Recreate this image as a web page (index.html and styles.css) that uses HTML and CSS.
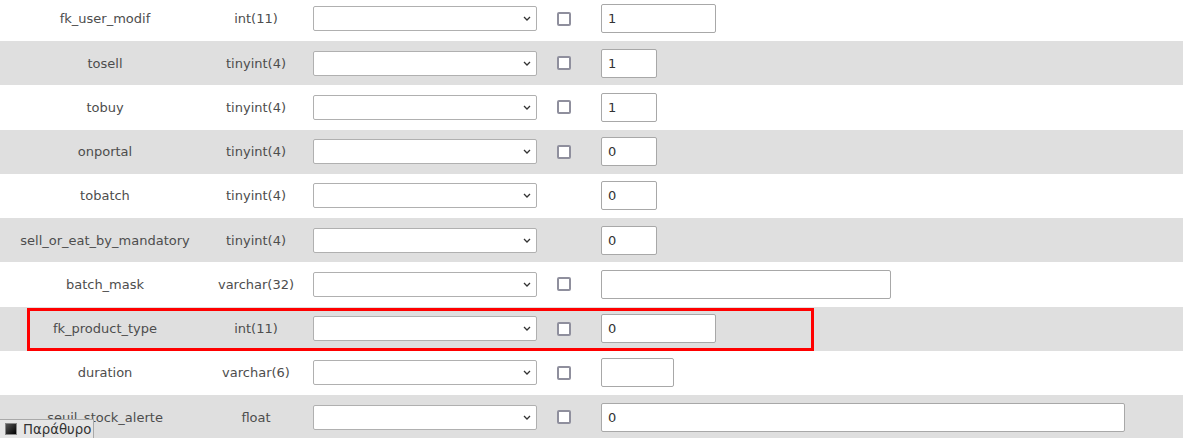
FILE: index.html
```html
<!DOCTYPE html>
<html lang="en">
<head>
  <meta charset="UTF-8">
  <title>Fields</title>
  <link rel="stylesheet" href="styles.css">
</head>
<body>

  <div class="fields">
    <!-- fk_user_modif -->
    <div class="row">
      <div class="name">fk_user_modif</div>
      <div class="type">int(11)</div>
      <div class="sel"><select><option></option></select></div>
      <div class="chk"><input type="checkbox"></div>
      <div class="val"><input type="text" class="w115" value="1"></div>
    </div>
    <div class="row alt">
      <div class="name">tosell</div>
      <div class="type">tinyint(4)</div>
      <div class="sel"><select><option></option></select></div>
      <div class="chk"><input type="checkbox"></div>
      <div class="val"><input type="text" class="w56" value="1"></div>
    </div>
    <div class="row">
      <div class="name">tobuy</div>
      <div class="type">tinyint(4)</div>
      <div class="sel"><select><option></option></select></div>
      <div class="chk"><input type="checkbox"></div>
      <div class="val"><input type="text" class="w56" value="1"></div>
    </div>
    <div class="row alt">
      <div class="name">onportal</div>
      <div class="type">tinyint(4)</div>
      <div class="sel"><select><option></option></select></div>
      <div class="chk"><input type="checkbox"></div>
      <div class="val"><input type="text" class="w56" value="0"></div>
    </div>
    <div class="row">
      <div class="name">tobatch</div>
      <div class="type">tinyint(4)</div>
      <div class="sel"><select><option></option></select></div>
      <div class="chk"></div>
      <div class="val"><input type="text" class="w56" value="0"></div>
    </div>
    <div class="row alt">
      <div class="name">sell_or_eat_by_mandatory</div>
      <div class="type">tinyint(4)</div>
      <div class="sel"><select><option></option></select></div>
      <div class="chk"></div>
      <div class="val"><input type="text" class="w56" value="0"></div>
    </div>
    <div class="row">
      <div class="name">batch_mask</div>
      <div class="type">varchar(32)</div>
      <div class="sel"><select><option></option></select></div>
      <div class="chk"><input type="checkbox"></div>
      <div class="val"><input type="text" class="w290" value=""></div>
    </div>
    <div class="row alt marked">
      <div class="name">fk_product_type</div>
      <div class="type">int(11)</div>
      <div class="sel"><select><option></option></select></div>
      <div class="chk"><input type="checkbox"></div>
      <div class="val"><input type="text" class="w115" value="0"></div>
      <div class="highlight"></div>
    </div>
    <div class="row">
      <div class="name">duration</div>
      <div class="type">varchar(6)</div>
      <div class="sel"><select><option></option></select></div>
      <div class="chk"><input type="checkbox"></div>
      <div class="val"><input type="text" class="w73" value=""></div>
    </div>
    <div class="row alt">
      <div class="name">seuil_stock_alerte</div>
      <div class="type">float</div>
      <div class="sel"><select><option></option></select></div>
      <div class="chk"><input type="checkbox"></div>
      <div class="val"><input type="text" class="w524" value="0"></div>
    </div>
  </div>

  <!-- taskbar button -->
  <div class="taskbtn"><span class="taskicon"></span>Παράθυρο</div>

</body>
</html>
```

FILE: styles.css
```css
body {
  font-family: "DejaVu Sans", sans-serif;
  font-size: 13px;
  color: #4d4d4d;
  margin: 0;
  padding: 0;
  background: #fff;
  overflow: hidden;
}
.fields {
  margin-top: -3.25px;
}
.row {
  position: relative;
  display: grid;
  grid-template-columns: 210px 92px 245px 34px 1fr;
  align-items: center;
  height: 44.25px;
}
.row.alt {
  background-color: #dfdfdf;
}
.name, .type {
  text-align: center;
}
.sel {
  padding-left: 11px;
}
select {
  width: 224px;
  height: 25px;
  margin: 0;
  border: 1px solid #b0b0b0;
  border-radius: 2px;
  background: #fff url("data:image/svg+xml,%3Csvg xmlns='http://www.w3.org/2000/svg' width='8' height='5'%3E%3Cpath d='M1 1l3 3 3-3' fill='none' stroke='%23333' stroke-width='1.3'/%3E%3C/svg%3E") no-repeat right 5px center;
  appearance: none;
  -webkit-appearance: none;
  font-family: inherit;
  font-size: 13px;
}
.chk {
  display: flex;
  justify-content: center;
}
.chk input {
  appearance: none;
  -webkit-appearance: none;
  width: 14px;
  height: 14px;
  margin: 0;
  border: 2px solid #8f8f9d;
  border-radius: 2px;
  background: #fff;
}
.val {
  padding-left: 20px;
}
.val input {
  box-sizing: border-box;
  height: 29px;
  margin: 0;
  padding: 0 6px;
  border: 1px solid #a8a8a8;
  border-radius: 2px;
  background: #fff;
  font-family: inherit;
  font-size: 13px;
  color: #333;
}
.w56 { width: 56px; }
.w73 { width: 73px; }
.w115 { width: 115px; }
.w290 { width: 290px; }
.w524 { width: 524px; }
.highlight {
  position: absolute;
  left: 27px;
  top: 1px;
  width: 787px;
  height: 43px;
  box-sizing: border-box;
  border: 3px solid #ff0000;
  pointer-events: none;
}
.taskbtn {
  position: fixed;
  left: 0;
  bottom: 0;
  width: 94px;
  height: 19px;
  box-sizing: border-box;
  display: flex;
  align-items: center;
  gap: 6px;
  padding-left: 5px;
  background: #e6e6e6;
  border-top: 1px solid #a9a9a9;
  border-right: 1px solid #a9a9a9;
  color: #333;
  font-size: 13.3px;
  white-space: nowrap;
}
.taskicon {
  flex: none;
  width: 12px;
  height: 12px;
  background: linear-gradient(135deg, #555, #000);
  border: 1px solid #888;
  box-sizing: border-box;
}
```
